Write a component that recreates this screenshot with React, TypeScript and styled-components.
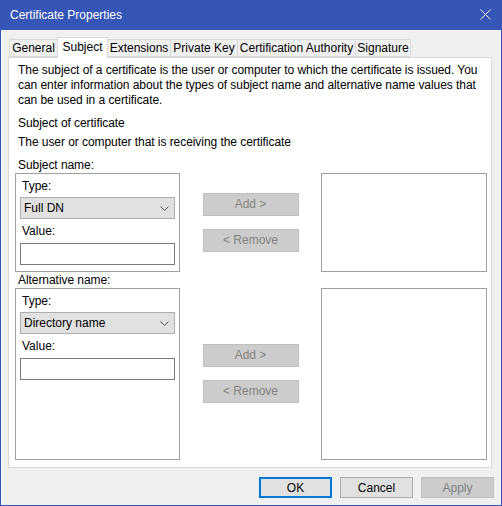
import React from 'react'
import styled, { createGlobalStyle } from 'styled-components'

const GlobalStyle = createGlobalStyle`
  html, body {
    margin: 0;
    padding: 0;
    background: #ffffff;
  }
  * {
    box-sizing: border-box;
  }
`

const accent = '#3556b6'

const Window = styled.div`
  width: 502px;
  height: 506px;
  border: 1px solid ${accent};
  border-top: none;
  background: #f0f0f0;
  display: flex;
  flex-direction: column;
  font-family: 'Segoe UI', 'Liberation Sans', Arial, sans-serif;
  font-size: 12px;
  color: #000000;
`

const TitleBar = styled.div`
  height: 30px;
  margin: 0 -1px;
  background: ${accent};
  color: #ffffff;
  display: flex;
  align-items: center;
  justify-content: space-between;
  padding: 0 9px 1px 10px;
  font-size: 12px;
`

const CloseButton = styled.div`
  width: 14px;
  height: 14px;
  display: flex;
  align-items: center;
  justify-content: center;
  margin-right: 1px;
`

const Body = styled.div`
  padding: 7px 0 0 7px;
  display: flex;
  flex-direction: column;
`

const TabStrip = styled.div`
  display: flex;
  align-items: flex-end;
  height: 20px;
  margin-left: 1px;
`

const Tab = styled.div<{ $active?: boolean; $width: number }>`
  width: ${({ $width }) => $width}px;
  height: ${({ $active }) => ($active ? 21 : 18)}px;
  margin-bottom: ${({ $active }) => ($active ? -1 : 0)}px;
  background: ${({ $active }) => ($active ? '#ffffff' : '#f0f0f0')};
  border: 1px solid #d9d9d9;
  border-bottom: ${({ $active }) => ($active ? 'none' : '1px solid #d9d9d9')};
  margin-right: -1px;
  position: relative;
  z-index: ${({ $active }) => ($active ? 2 : 1)};
  display: flex;
  justify-content: center;
  align-items: ${({ $active }) => ($active ? 'flex-start' : 'center')};
  padding-top: ${({ $active }) => ($active ? 1 : 0)}px;
  line-height: 16px;
  white-space: nowrap;
`

const Panel = styled.div`
  width: 484px;
  height: 411px;
  background: #ffffff;
  border: 1px solid #d9d9d9;
  padding: 5px 4px 6px 6px;
  display: flex;
  flex-direction: column;
  line-height: 15px;
`

const Text = styled.div<{ $gap?: number }>`
  padding-left: 3px;
  margin-top: ${({ $gap }) => $gap || 0}px;
  white-space: nowrap;
  letter-spacing: -0.06px;
`

const Row = styled.div<{ $height: number }>`
  display: grid;
  grid-template-columns: 165px 1fr 166px;
  height: ${({ $height }) => $height}px;
`

const GroupBox = styled.div`
  border: 1px solid #a0a0a0;
  padding: 5px 4px;
  display: flex;
  flex-direction: column;
`

const FieldLabel = styled.div<{ $gap?: number }>`
  padding-left: 2px;
  margin-top: ${({ $gap }) => $gap || 0}px;
`

const Select = styled.div`
  margin-top: 3px;
  height: 22px;
  background: #e1e1e1;
  border: 1px solid #adadad;
  display: flex;
  align-items: center;
  justify-content: space-between;
  padding: 0 5px 0 3px;
`

const Input = styled.div`
  margin-top: 4px;
  height: 22px;
  background: #ffffff;
  border: 1px solid #7a7a7a;
`

const ButtonColumn = styled.div<{ $top: number }>`
  display: flex;
  flex-direction: column;
  align-items: center;
  padding-top: ${({ $top }) => $top}px;
  gap: 13px;
`

const MoveButton = styled.div`
  width: 96px;
  height: 23px;
  background: #cccccc;
  border: 1px solid #bfbfbf;
  color: #838383;
  display: flex;
  align-items: center;
  justify-content: center;
  padding-bottom: 1px;
`

const ListBox = styled.div`
  background: #ffffff;
  border: 1px solid #a0a0a0;
`

const Footer = styled.div`
  display: flex;
  justify-content: flex-end;
  gap: 8px;
  padding: 9px 7px 0 0;
`

const DialogButton = styled.div<{ $default?: boolean; $disabled?: boolean }>`
  width: 73px;
  height: 21px;
  background: ${({ $disabled }) => ($disabled ? '#cccccc' : '#e1e1e1')};
  border: ${({ $default, $disabled }) =>
    $default ? '2px solid #0078d7' : $disabled ? '1px solid #bfbfbf' : '1px solid #adadad'};
  color: ${({ $disabled }) => ($disabled ? '#838383' : '#000000')};
  display: flex;
  align-items: center;
  justify-content: center;
`

const Chevron = () => (
  <svg width="9" height="5" viewBox="0 0 9 5">
    <path d="M0.5 0.5 L4.5 4.5 L8.5 0.5" fill="none" stroke="#444444" strokeWidth="0.9" />
  </svg>
)

const CloseIcon = () => (
  <svg width="11" height="11" viewBox="0 0 11 11">
    <path d="M0.5 0.5 L10.5 10.5 M10.5 0.5 L0.5 10.5" stroke="#ffffff" strokeWidth="1" />
  </svg>
)

const tabs = [
  { label: 'General', width: 49 },
  { label: 'Subject', width: 51, active: true },
  { label: 'Extensions', width: 64 },
  { label: 'Private Key', width: 68 },
  { label: 'Certification Authority', width: 119 },
  { label: 'Signature', width: 56 },
]

const NameGroup = ({ type, height, buttonsTop }: { type: string; height: number; buttonsTop: number }) => (
  <Row $height={height}>
    <GroupBox>
      <FieldLabel>Type:</FieldLabel>
      <Select>
        <span>{type}</span>
        <Chevron />
      </Select>
      <FieldLabel $gap={5}>Value:</FieldLabel>
      <Input />
    </GroupBox>
    <ButtonColumn $top={buttonsTop}>
      <MoveButton>Add &gt;</MoveButton>
      <MoveButton>&lt; Remove</MoveButton>
    </ButtonColumn>
    <ListBox />
  </Row>
)

export default function App() {
  return (
    <>
      <GlobalStyle />
      <Window>
        <TitleBar>
          <span>Certificate Properties</span>
          <CloseButton>
            <CloseIcon />
          </CloseButton>
        </TitleBar>
        <Body>
          <TabStrip>
            {tabs.map((t) => (
              <Tab key={t.label} $active={t.active} $width={t.width}>
                {t.label}
              </Tab>
            ))}
          </TabStrip>
          <Panel>
            <Text>The subject of a certificate is the user or computer to which the certificate is issued. You</Text>
            <Text>can enter information about the types of subject name and alternative name values that</Text>
            <Text>can be used in a certificate.</Text>
            <Text $gap={8}>Subject of certificate</Text>
            <Text $gap={4}>The user or computer that is receiving the certificate</Text>
            <Text $gap={8}>Subject name:</Text>
            <NameGroup type="Full DN" height={99} buttonsTop={20} />
            <Text $gap={1}>Alternative name:</Text>
            <NameGroup type="Directory name" height={172} buttonsTop={56} />
          </Panel>
        </Body>
        <Footer>
          <DialogButton $default>OK</DialogButton>
          <DialogButton>Cancel</DialogButton>
          <DialogButton $disabled>Apply</DialogButton>
        </Footer>
      </Window>
    </>
  )
}
